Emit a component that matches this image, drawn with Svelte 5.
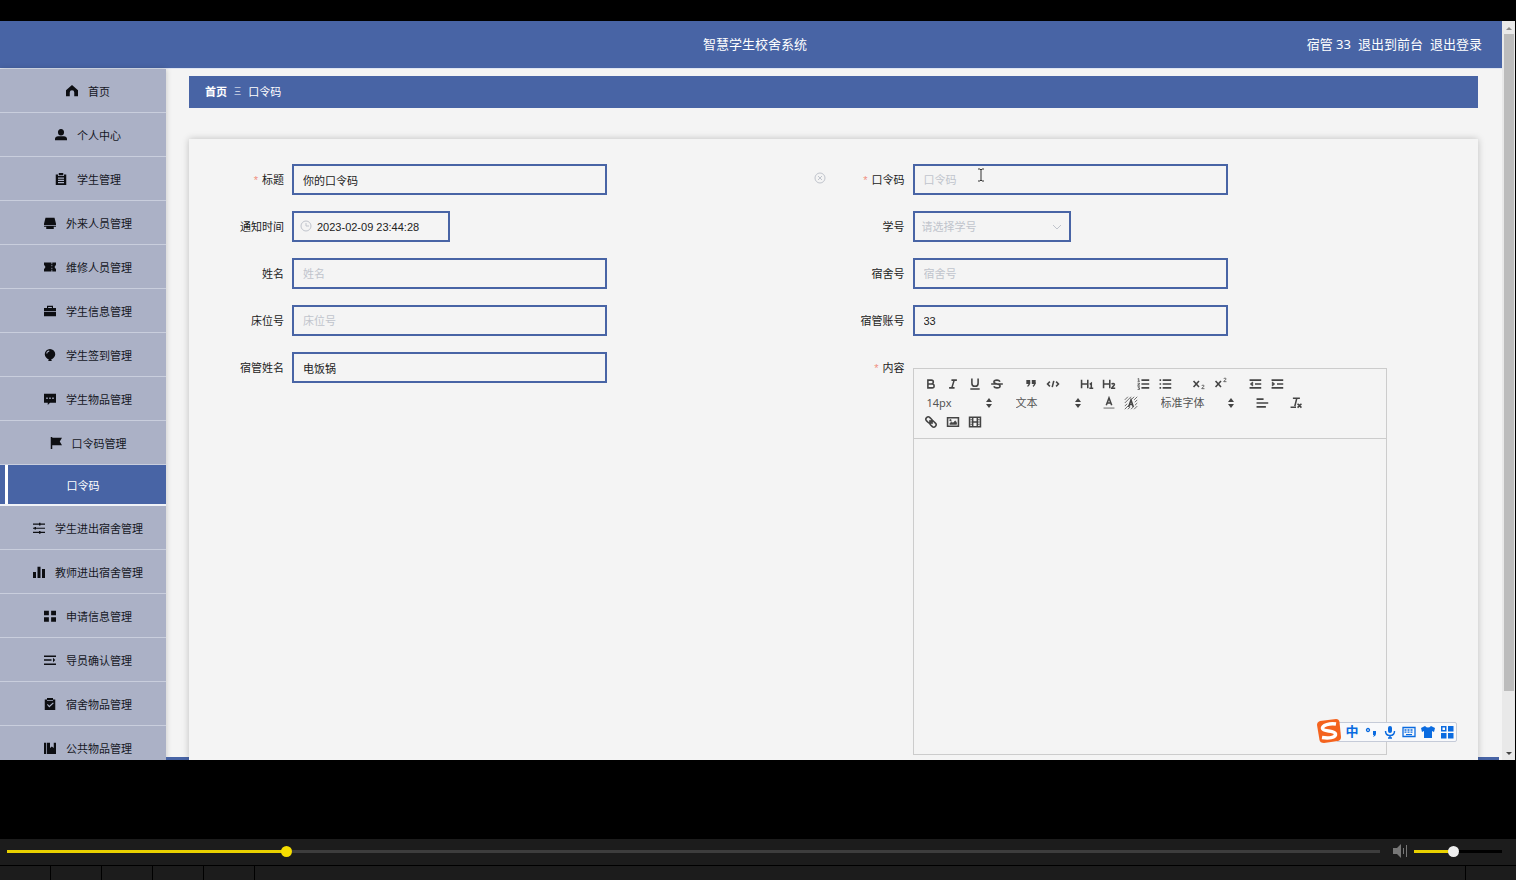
<script>
  const menu = [
    { name: '首页', icon: 'home' },
    { name: '个人中心', icon: 'user' },
    { name: '学生管理', icon: 'order' },
    { name: '外来人员管理', icon: 'platform' },
    { name: '维修人员管理', icon: 'ticket' },
    { name: '学生信息管理', icon: 'case' },
    { name: '学生签到管理', icon: 'balloon' },
    { name: '学生物品管理', icon: 'comment' },
    { name: '口令码管理', icon: 'flag', children: ['口令码'] },
    { name: '学生进出宿舍管理', icon: 'operation' },
    { name: '教师进出宿舍管理', icon: 'data' },
    { name: '申请信息管理', icon: 'grid' },
    { name: '导员确认管理', icon: 'unfold' },
    { name: '宿舍物品管理', icon: 'claim' },
    { name: '公共物品管理', icon: 'book' }
  ];

  // 16x16 filled glyphs
  const icons = {
    home: 'M8 0 0 7v8h5v-5a3 3 0 0 1 6 0v5h5V7z',
    user: 'M8 0a4 4 0 0 1 4 4.500a4 4 0 0 1-8 0A4 4 0 0 1 8 0zM0 15v-2c0-2 2-3.500 4-3.500h8c2 0 4 1.500 4 3.500v2z',
    order: 'M1 2h3v2h8V2h3v14H1zM5 0h6v3H5zM4 6v1.500h8V6zm0 3v1.500h8V9zm0 3v1.500h8V12z',
    platform: 'M2 1h12l2 8v2H0V9zM0 12h16v1h-3v3H3v-3H0z',
    ticket: 'M0 2h10v2h1V2h5v3l-2 3 2 3v3h-5v-2h-1v2H0v-3l2-3-2-3zM10 5v2h1V5zm0 4v2h1V9z',
    case: 'M4 4V1h8v3h4v4H0V4zm1.500-1.500V4h5V2.500zM0 9h16v6H0z',
    balloon: 'M8 0a7 7 0 0 1 7 7c0 3-3 6-5.500 7l1 2h-5l1-2C4 13 1 10 1 7a7 7 0 0 1 7-7zM3 6h1.500C4.500 4.500 5.500 3.500 7 3.500V2C4.500 2 3 4 3 6z',
    comment: 'M0 1h16v12H8l-3 3v-3H0zM3 6v2h2V6zm4 0v2h2V6zm4 0v2h2V6z',
    flag: 'M1 0h2v1h13l-3 5 3 5H3v5H1z',
    operation: 'M0 2h8V1h2v1h6v1.500h-6v1H8v-1H0zM0 7.500h2v-1h2v1h12V9H4v1H2V9H0zM0 13h8v-1h2v1h6v1.500h-6v1H8v-1H0z',
    data: 'M0 8h4v8H0zM6 1h4v15H6zM12 4h4v12h-4z',
    grid: 'M0 1h6.500v6H0zM9.500 1H16v6H9.500zM0 9.500h6.500v6H0zM9.500 9.500H16v6H9.500z',
    unfold: 'M0 2h16v2H0zM0 7h10v2H0zM12 5l3 3-3 3zM0 12.500h16v2H0z',
    claim: 'M1 2h3V0h8v2h3v14H1zM4 3v1h8V3zM4 9l3 3.500 6-5.500-1-1-5 4.200L5 8z',
    book: 'M0 1h3v15H0zM4 1h4v7l2.500-2L13 8V1h3v15H4z'
  };

  // rich text toolbar, 18x18 stroked glyphs
  const tools = {
    bold: '<path d="M5 4h4.500a2.500 2.500 0 0 1 0 5H5zM5 9h5.500a2.500 2.500 0 0 1 0 5H5z"/>',
    italic: '<path d="M7 4h7M4 14h7M7.500 14l3-10"/>',
    underline: '<path d="M5 2v6a4 4 0 0 0 8 0V2M3 15.500h12"/>',
    strike: '<path d="M13 6C12 4.500 10.500 4 9 4 7 4 5 5 5 6.500S7 8.500 9 9s4 1 4 2.500S11 14 9 14s-3.500-.7-4.200-2M1.500 9h15"/>',
    quote: '<path fill="currentColor" d="M4 5h3v3H4zM11 5h3v3h-3z"/><path d="M7 7c0 3-.5 4-2.500 5M14 7c0 3-.5 4-2.500 5"/>',
    code: '<path d="M5 6 2 9l3 3M13 6l3 3-3 3M10 5 8 13"/>',
    h1: '<path d="M2 3.500v11M10 3.500v11M2 9h8M12.500 9.500l2-1.500v6.500M12 14.500h5"/>',
    h2: '<path d="M2 3.500v11M10 3.500v11M2 9h8M12.500 9.500c.6-1.500 3.500-1.500 3.500.3 0 1.500-3.500 3-3.500 4.700H17"/>',
    ordered: '<path d="M7 4h10M7 9h10M7 14h10"/><path stroke-width="1" d="M2 2.500l1.500-.5v3.500M2 5.500h3M2 8h2.500v1L2 10.500h3M2 12.500h2.500L3 14h1.500v2H2"/>',
    bullet: '<path d="M6 4h11M6 9h11M6 14h11M2 4h2M2 9h2M2 14h2"/>',
    sub: '<path d="M2 5l7 8M9 5l-7 8"/><path stroke-width="1" d="M12.500 11.500c.5-1.500 3-1.500 3 0s-3 2-3 3.500H16"/>',
    sup: '<path d="M2 5l7 8M9 5l-7 8"/><path stroke-width="1" d="M12.500 2.500c.5-1.500 3-1.500 3 0s-3 2-3 3.500H16"/>',
    outdent: '<path d="M2 4h15M9 9h8M2 14h15"/><path fill="currentColor" stroke-width="1" d="M6 6.500v5L3 9z"/>',
    indent: '<path d="M2 4h15M9 9h8M2 14h15"/><path fill="currentColor" stroke-width="1" d="M3 6.500v5L6 9z"/>',
    color: '<path d="M5.500 12 9 2.500l3.500 9.500M7 9h4"/><path stroke-width="1" d="M2 15.500h14"/>',
    background: '<path stroke-width="1" d="M1 5l4-4M1 9l8-8M1 13l3-3M9 5l4-4M1 17l5-5M13 5l4-4M5 17l3-3M14 8l3-3M9 17l3-3M14 12l3-3M13 17l4-4"/><path d="M6 14 9 5l3 9M7 11h4"/>',
    align: '<path d="M2 4h9M2 9h15M2 14h12"/>',
    clean: '<path d="M5 3h9M10 3 7.500 13M2 14.500h7M11 10l5 5M16 10l-5 5"/>',
    link: '<g transform="rotate(45 9 9)"><rect x="1" y="6" width="9" height="6" rx="3"/><rect x="8" y="6" width="9" height="6" rx="3"/><path d="M6 9h6"/></g>',
    image: '<path d="M2 3.500h14v11H2z"/><path fill="currentColor" stroke-width="1" d="M5 12V11l2-2 2 1.500 3-3 1.500 2.500v2zM5 6h1.500v1.500H5z"/>',
    video: '<path d="M2 3h14v12H2zM6 3v12M12 3v12M6 9h6"/><path stroke-width="1" d="M3 6h3M3 9h3M3 12h3M12 6h3M12 9h3M12 12h3"/>'
  };

  const rows = [
    [['bold', 'italic', 'underline', 'strike'], ['quote', 'code'], ['h1', 'h2'], ['ordered', 'bullet'], ['sub', 'sup'], ['outdent', 'indent']],
    ['14px', '文本', ['color', 'background'], '标准字体', ['align'], ['clean']],
    [['link', 'image', 'video']]
  ];

  let form = $state({
    title: '你的口令码',
    code: '',
    time: '2023-02-09 23:44:28',
    name: '',
    room: '',
    bed: '',
    account: '33',
    keeper: '电饭锅'
  });

  let played = $state(201);
  let volume = $state(44);
</script>

{#snippet field(key, label, required)}
  <div class="item">
    <label for={key}>{#if required}<span class="star">*</span>{/if}{label}</label>
    <input id={key} class="box" type="text" placeholder={label} bind:value={form[key]} />
    {#if key === 'title'}
      <button type="button" class="clear" aria-label="清空">
        <svg viewBox="0 0 12 12"><circle cx="6" cy="6" r="5" /><path d="M4 4l4 4M8 4l-4 4" /></svg>
      </button>
    {/if}
    {#if key === 'code'}
      <svg class="caret" viewBox="0 0 8 14"><path d="M1 1h2l1 1 1-1h2M4 2v10M1 13h2l1-1 1 1h2" /></svg>
    {/if}
  </div>
{/snippet}

<div class="player">
  <div class="screen">
    <div class="page">
      <header>
        <h1>智慧学生校舍系统</h1>
        <div class="account">
          <span>宿管 33</span>
          <a href="#front">退出到前台</a>
          <a href="#logout">退出登录</a>
        </div>
      </header>

      <div class="body">
        <nav>
          {#each menu as item}
            <a class="menu-item" href="#menu">
              <svg viewBox="0 0 16 16"><path fill-rule="evenodd" d={icons[item.icon]} /></svg>
              <span>{item.name}</span>
            </a>
            {#each item.children ?? [] as child}
              <a class="sub-item" href="#sub">{child}</a>
            {/each}
          {/each}
        </nav>

        <main>
          <div class="crumb">
            <a href="#home">首页</a>
            <span class="sep">Ξ</span>
            <span>口令码</span>
          </div>

          <form class="card">
            {@render field('title', '标题', true)}
            {@render field('code', '口令码', true)}
            <div class="item">
              <label for="time">通知时间</label>
              <div class="half">
                <svg class="clock" viewBox="0 0 12 12"><circle cx="6" cy="6" r="5" /><path d="M6 3v3h3" /></svg>
                <input id="time" class="box" type="text" bind:value={form.time} />
              </div>
            </div>
            <div class="item">
              <label for="number">学号</label>
              <div class="half">
                <select id="number" class="box">
                  <option>请选择学号</option>
                </select>
                <svg class="arrow" viewBox="0 0 12 12"><path d="M2 4l4 4 4-4" /></svg>
              </div>
            </div>
            {@render field('name', '姓名', false)}
            {@render field('room', '宿舍号', false)}
            {@render field('bed', '床位号', false)}
            {@render field('account', '宿管账号', false)}
            {@render field('keeper', '宿管姓名', false)}
            <div class="item">
              <label for="content"><span class="star">*</span>内容</label>
              <div class="editor">
                <div class="toolbar">
                  {#each rows as row}
                    <div class="tool-row">
                      {#each row as group}
                        {#if typeof group === 'string'}
                          <div class="picker" class:wide={group === '标准字体'}>
                            <select aria-label={group}>
                              <option>{group}</option>
                            </select>
                            <svg viewBox="0 0 8 10"><path d="M4 0l3 4H1zM4 10 1 6h6z" /></svg>
                          </div>
                        {:else}
                          <div class="group">
                            {#each group as tool}
                              <button type="button" aria-label={tool}>
                                <svg viewBox="0 0 18 18">{@html tools[tool]}</svg>
                              </button>
                            {/each}
                          </div>
                        {/if}
                      {/each}
                    </div>
                  {/each}
                </div>
                <textarea id="content"></textarea>
              </div>
            </div>
          </form>
        </main>
      </div>
    </div>

    <div class="scrollbar">
      <svg viewBox="0 0 8 5"><path fill="#8c8c8c" d="M4 1l3 3H1z" /></svg>
      <div class="track"><div class="thumb"></div></div>
      <svg viewBox="0 0 8 5"><path fill="#444" d="M4 4 1 1h6z" /></svg>
    </div>

    <div class="ime">
      <svg class="sogou" viewBox="0 0 26 26">
        <path fill="#f4631e" d="M4 3 20 1q3 0 3.500 3L25 19q0 3-3 4L8 25q-4 0-4.500-3L1 7q0-3 3-4z" />
        <path fill="none" stroke="#fff" stroke-width="3.500" d="M20 6C14 5 6 7 6.500 10.500S19 12 19.500 16 12 20.500 6 19.500" />
      </svg>
      <span>中</span>
      <svg viewBox="0 0 14 14"><circle cx="4" cy="5" r="1.500" fill="none" stroke="#0a6be0" stroke-width="1.300" /><path d="M9 6h3v3q0 2-3 3l1-2H9z" /></svg>
      <svg viewBox="0 0 14 14"><rect x="5" y="1" width="4" height="7" rx="2" /><path fill="none" stroke="#0a6be0" stroke-width="1.500" d="M2.500 6q0 4.500 4.500 4.500T11.500 6M7 10v3M5 13h4" /></svg>
      <svg viewBox="0 0 14 14"><path fill="none" stroke="#0a6be0" stroke-width="1.300" d="M1 2.500h12v9H1z" /><path fill="none" stroke="#0a6be0" stroke-width="1.300" stroke-dasharray="2 1" d="M2.500 5h9M2.500 7.200h9" /><path d="M4 9h6v1.200H4z" /></svg>
      <svg viewBox="0 0 14 14"><path d="M4 1q3 3 6 0l4 2-1 4-2-1v7H3V6L1 7 0 3z" /></svg>
      <svg viewBox="0 0 14 14"><path fill-rule="evenodd" d="M1 1h5.500v5.500H1zm1.500 1.500V5H5V2.500zM8 1h5.500v5.500H8zM1 8h5.500v5.500H1zM8 8h5.500v5.500H8z" /></svg>
    </div>
  </div>

  <div class="controls">
    <input class="seek" type="range" max="1000" aria-label="进度" bind:value={played} style="--fill: {played / 10}%" />
    <svg class="speaker" viewBox="0 0 16 14"><path d="M1 4h4l4-4v14l-4-4H1zM11 4h1v6h-1zM14 1h1v12h-1z" /></svg>
    <input class="volume" type="range" max="100" aria-label="音量" bind:value={volume} style="--fill: {volume}%" />
  </div>
  <div class="buttons">
    {#each ['播放', '停止', '上一个', '下一个', '打开'] as name}
      <button aria-label={name}></button>
    {/each}
    <div class="rest"></div>
    <button aria-label="全屏"></button>
  </div>
</div>

<style>
  :global(body) { margin: 0; background: #000; }
  * { box-sizing: border-box; }
  a { color: inherit; text-decoration: none; }
  button { padding: 0; border: 0; background: none; }

  .player {
    display: flex;
    flex-direction: column;
    height: 100vh;
    background: #000;
    font-family: 'Liberation Sans', 'Noto Sans CJK SC', sans-serif;
    font-size: 11px;
    color: #222;
  }
  .screen { position: relative; display: flex; flex: 1; min-height: 0; margin: 21px 1px 79px 0; overflow: hidden; }
  .page { display: flex; flex-direction: column; flex: 1; min-width: 0; background: #f4f4f4; }

  header {
    display: grid;
    grid-template-columns: 1fr auto 1fr;
    align-items: center;
    flex: none;
    height: 48px;
    padding: 0 20px 2px 28px;
    border-bottom: 1px solid #dfe5f2;
    background: #4864a5;
    color: #fff;
    font-family: 'Noto Sans', 'Noto Sans CJK SC', sans-serif;
    font-size: 13px;
  }
  h1 { grid-column: 2; margin: 0; font-size: 13px; font-weight: normal; }
  .account { display: flex; gap: 7px; justify-content: flex-end; white-space: nowrap; }

  .body { display: flex; flex: 1; min-height: 0; }
  nav { flex: none; width: 166px; overflow: hidden; background: #abb1c6; box-shadow: 0 0 6px rgba(0, 0, 0, 0.2); }
  .menu-item {
    display: flex;
    align-items: center;
    justify-content: center;
    gap: 10px;
    height: 44px;
    padding-left: 10px;
    border-bottom: 1px solid #c9cedd;
    color: #15171f;
  }
  .menu-item svg { width: 12px; height: 12px; fill: #0d0e12; }
  .sub-item {
    display: flex;
    align-items: center;
    justify-content: center;
    height: 41px;
    border-bottom: 2px solid #f0f2f7;
    background: linear-gradient(to right, #4864a5 5px, #fff 5px, #fff 8px, #4864a5 8px);
    color: #fff;
  }

  main {
    display: flex;
    flex-direction: column;
    flex: 1;
    min-width: 0;
    padding: 7px 24px 0 23px;
    background: linear-gradient(#4864a5, #4864a5) left bottom / calc(100% - 3px) 3px no-repeat;
  }
  .crumb {
    display: flex;
    align-items: center;
    gap: 7px;
    flex: none;
    height: 32px;
    margin-bottom: 31px;
    padding: 0 16px 2px;
    background: #4864a5;
    color: #fff;
  }
  .crumb a { font-weight: bold; }
  .sep { color: #c8d0e4; }

  .card {
    display: grid;
    grid-template-columns: 1fr 1fr;
    align-content: start;
    row-gap: 16px;
    flex: 1;
    min-height: 0;
    padding: 25px 24px 0;
    background: #f4f4f4;
    box-shadow: 0 0 7px rgba(0, 0, 0, 0.22);
  }
  .item { position: relative; display: flex; align-items: flex-start; }
  label { flex: none; width: 79px; height: 31px; padding-right: 8px; line-height: 33px; text-align: right; }
  .star { margin-right: 4px; color: #f0907f; }
  .box {
    width: 315px;
    height: 31px;
    padding: 0 9px;
    border: 2px solid #4864a5;
    border-radius: 0;
    outline: 0;
    background: #f4f4f4;
    color: #222;
    font: inherit;
  }
  .box::placeholder { color: #c0c4cc; }
  .half { position: relative; width: 158px; }
  .half .box { width: 100%; }
  .half input { padding-left: 23px; }
  select { appearance: none; font: inherit; }
  select.box { padding: 0 7px; color: #c0c4cc; }
  .clock, .arrow, .clear svg { width: 12px; height: 12px; fill: none; stroke: #c0c4cc; }
  .clock { position: absolute; top: 9px; left: 8px; }
  .arrow { position: absolute; top: 10px; right: 8px; }
  .clear { height: 28px; margin: 0 8px 0 auto; }
  .clear svg { display: block; }
  .caret { position: absolute; top: 4px; left: 143px; width: 8px; height: 14px; fill: none; stroke: #333; }

  .editor { width: 474px; margin-top: 16px; border: 1px solid #ccc; }
  .toolbar { padding: 5px 6px 7px; border-bottom: 1px solid #ccc; }
  .tool-row { display: flex; gap: 12px; height: 19px; }
  .group { display: flex; }
  .group button { display: flex; align-items: center; justify-content: center; width: 22px; height: 19px; color: #444; }
  .group svg { width: 14px; height: 14px; fill: none; stroke: currentColor; stroke-width: 2; }
  .picker { position: relative; width: 77px; }
  .wide { width: 85px; }
  .picker select {
    width: 100%;
    height: 19px;
    padding: 0 7px;
    border: 0;
    background: none;
    color: #555;
    font-family: 'Noto Sans', 'Noto Sans CJK SC', sans-serif;
  }
  .picker svg { position: absolute; top: 5px; right: 4px; width: 8px; height: 10px; fill: #444; }
  textarea { display: block; width: 100%; height: 315px; padding: 12px; border: 0; outline: 0; resize: none; background: none; font: inherit; }

  .scrollbar { display: flex; flex-direction: column; align-items: center; flex: none; width: 13px; padding: 5px 0 4px; background: #e9e9e9; }
  .scrollbar svg { width: 8px; height: 5px; }
  .track { flex: 1; width: 10px; margin: 3px 0; }
  .thumb { height: 92%; background: #bcbcbc; }

  .ime {
    position: absolute;
    right: 58px;
    bottom: 18px;
    display: flex;
    align-items: center;
    gap: 5px;
    height: 20px;
    padding: 0 2px 0 8px;
    border: 1px solid #c5cbd8;
    border-radius: 2px;
    background: #f8f9fb;
    color: #0a6be0;
  }
  .ime span { width: 14px; font-size: 13px; font-weight: bold; line-height: 18px; text-align: center; }
  .ime svg { width: 14px; height: 14px; fill: #0a6be0; }
  .ime .sogou { position: absolute; top: -5px; left: -21px; width: 26px; height: 26px; }

  .controls { display: flex; align-items: center; flex: none; height: 26px; padding: 0 14px 2px 7px; background: #1c1c1c; }
  input[type='range'] {
    appearance: none;
    height: 11px;
    margin: 0;
    background: linear-gradient(to right, #e9d100 var(--fill), var(--rail) var(--fill)) center / 100% 3px no-repeat;
  }
  input[type='range']::-webkit-slider-thumb { appearance: none; width: 11px; height: 11px; border-radius: 50%; background: var(--knob); }
  .seek { --rail: #3d3d3d; --knob: #f5dd00; flex: 1; min-width: 0; }
  .volume { --rail: #000; --knob: #eee; width: 88px; }
  .speaker { width: 16px; height: 14px; margin: 0 6px 0 12px; fill: #777; }

  .buttons { display: flex; gap: 1px; flex: none; height: 15px; padding-top: 1px; }
  .buttons button { width: 50px; background: #1c1c1c; }
  .rest { flex: 1; background: #1c1c1c; }
</style>
